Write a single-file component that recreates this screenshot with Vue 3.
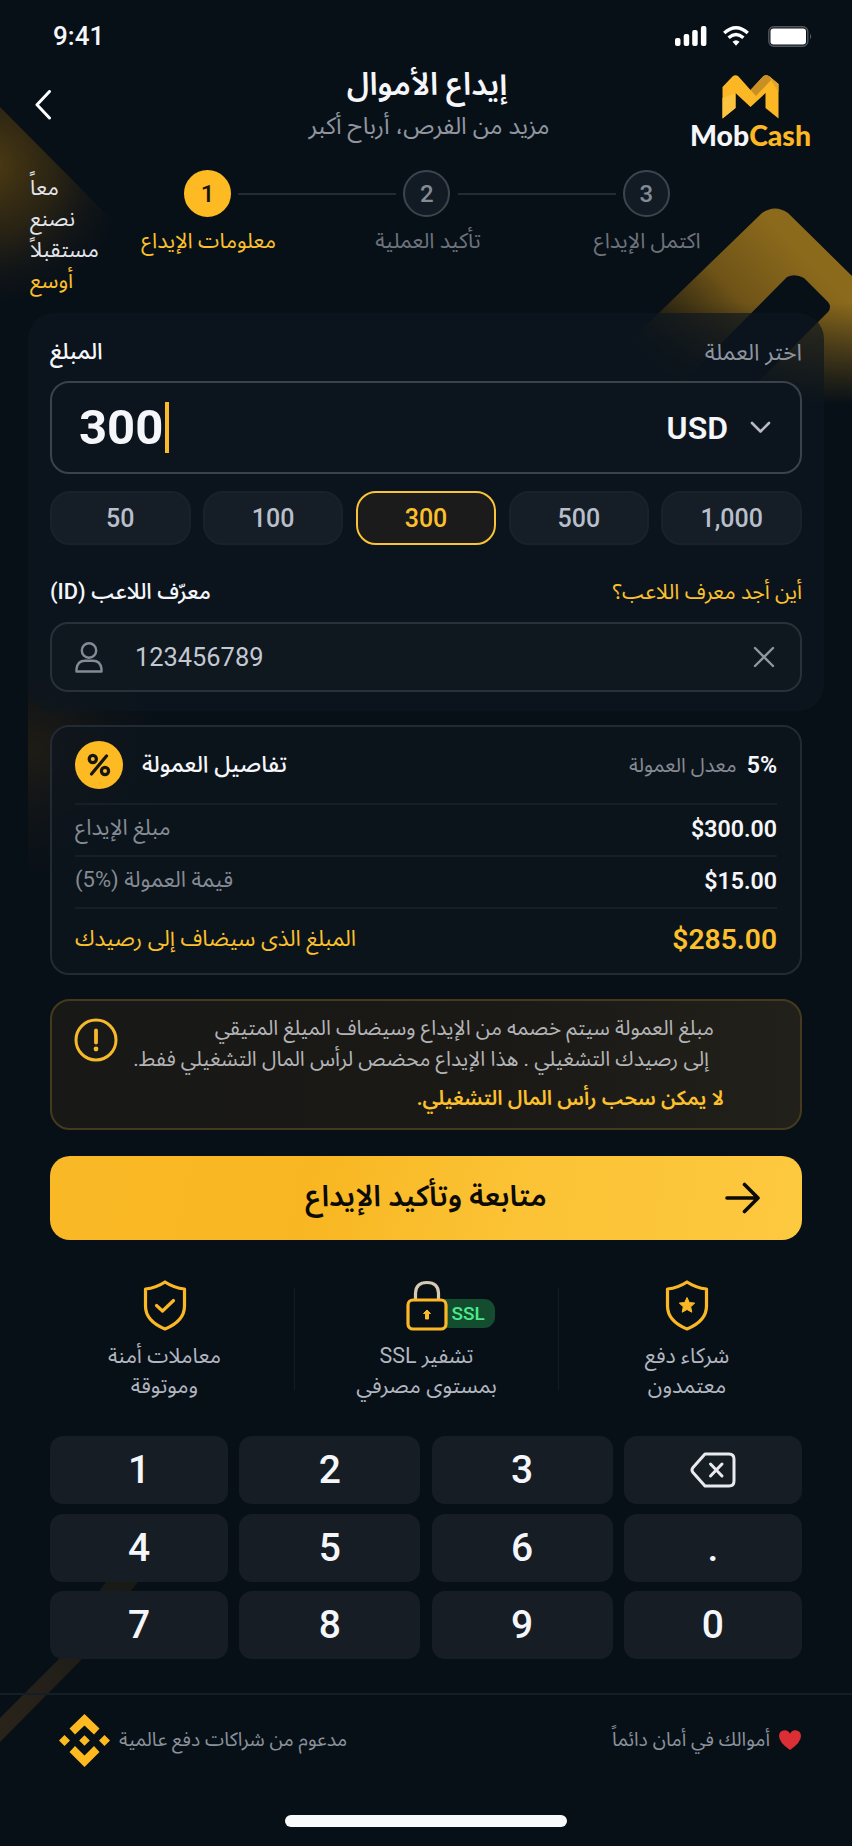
<script setup>
import { ref } from 'vue'

const amount = ref('300')
const presets = ['50', '100', '300', '500', '1,000']
const keys = ['1', '2', '3', 'back', '4', '5', '6', '.', '7', '8', '9', '0']
const steps = [
  { n: 1, label: 'معلومات الإيداع', active: true },
  { n: 2, label: 'تأكيد العملية', active: false },
  { n: 3, label: 'اكتمل الإيداع', active: false },
]
</script>

<template>
  <div class="screen">
    <svg class="decor" width="852" height="1846" viewBox="0 0 852 1846" aria-hidden="true">
      <defs>
        <linearGradient id="peak" gradientUnits="userSpaceOnUse" x1="790" y1="240" x2="650" y2="370">
          <stop offset="0" stop-color="#8c6a1c" />
          <stop offset="0.4" stop-color="#6f5418" />
          <stop offset="0.7" stop-color="#3a2e12" stop-opacity="0.9" />
          <stop offset="1" stop-color="#2a2312" stop-opacity="0" />
        </linearGradient>
        <linearGradient id="fadeY" x1="0" y1="0" x2="0" y2="1">
          <stop offset="0" stop-color="#fff" />
          <stop offset="0.5" stop-color="#fff" />
          <stop offset="1" stop-color="#000" />
        </linearGradient>
        <mask id="peakMask">
          <rect x="600" y="200" width="252" height="205" fill="url(#fadeY)" />
        </mask>
        <radialGradient id="wedge" gradientUnits="userSpaceOnUse" cx="-10" cy="165" r="140">
          <stop offset="0" stop-color="#4d3b12" />
          <stop offset="0.5" stop-color="#2b2413" stop-opacity="0.9" />
          <stop offset="1" stop-color="#14151a" stop-opacity="0" />
        </radialGradient>
        <radialGradient id="glow" gradientUnits="userSpaceOnUse" cx="34" cy="750" r="130">
          <stop offset="0" stop-color="#231e14" stop-opacity="0.85" />
          <stop offset="1" stop-color="#14151a" stop-opacity="0" />
        </radialGradient>
        <linearGradient id="beam" gradientUnits="userSpaceOnUse" x1="0" y1="1730" x2="130" y2="1585">
          <stop offset="0" stop-color="#29231a" />
          <stop offset="1" stop-color="#191916" />
        </linearGradient>
      </defs>
      <path d="M0 107 L120 228 V320 H0Z" fill="url(#wedge)" />
      <g mask="url(#peakMask)">
        <path
          fill="url(#peak)"
          fill-rule="evenodd"
          d="M762 213 Q775 204 788 213 L852 276 V405 H600 V370Z M787 277 Q795 273 804 278 L828 302 Q832 307 828 312 L735 405 H660Z"
        />
      </g>
      <rect x="28" y="640" width="180" height="250" fill="url(#glow)" />
      <path d="M0 1718 L58 1660 L97 1594 L106 1582 H138 L128 1594 L80 1661 L0 1742Z" fill="url(#beam)" />
    </svg>

    <header class="status">
      <span class="clock">9:41</span>
      <div class="status-icons">
        <svg width="32" height="20" viewBox="0 0 32 20" fill="#fff">
          <rect x="0" y="12" width="5.5" height="8" rx="2" />
          <rect x="8.7" y="8" width="5.5" height="12" rx="2" />
          <rect x="17.2" y="4" width="5.5" height="16" rx="2" />
          <rect x="25.9" y="0" width="5.5" height="20" rx="2" />
        </svg>
        <svg class="wifi" width="26" height="20" viewBox="0 0 26 20" fill="none" stroke="#fff" stroke-width="3.4">
          <path d="M1.2 7 Q13 -3.400 24.800 7" />
          <path d="M5.600 11.700 Q13 5.300 20.400 11.700" />
          <path d="M13 19.800 L9.500 15.800 Q13 12.800 16.500 15.800Z" fill="#fff" stroke="none" />
        </svg>
        <svg class="battery" width="45" height="21" viewBox="0 0 45 21" fill="none">
          <rect x="0.8" y="0.8" width="39" height="19.400" rx="5" stroke="#50565e" stroke-width="1.400" />
          <rect x="2.500" y="2.500" width="35.500" height="16" rx="3" fill="#fff" />
          <path d="M42 7.500 q2.500 3 0 6z" fill="#50565e" />
        </svg>
      </div>
    </header>

    <div class="top">
      <button class="back" aria-label="رجوع">
        <svg width="16" height="30" viewBox="0 0 16 30" fill="none" stroke="#fff" stroke-width="3" stroke-linecap="round" stroke-linejoin="round">
          <path d="M14.500 1.500 L2 14.800 L14.500 28" />
        </svg>
      </button>
      <div class="titles">
        <h1 dir="rtl">إيداع الأموال</h1>
        <p dir="rtl">مزيد من الفرص، أرباح أكبر</p>
      </div>
      <div class="brand">
        <svg width="57" height="44" viewBox="0 0 57 44">
          <path d="M0.500 12 L10.500 1.500 Q13.500 -0.800 16.500 1.500 L28.500 15 L41 1.500 Q44 -0.800 47.500 1.500 L56.500 9 V43.500 L43.500 33 V18 L28.500 32 L13.500 18 V33 L0.500 43.500Z" fill="#fbb724" />
          <path d="M28.500 15 L41 1.500 Q44 -0.800 47.500 1.500 L50 4 L34 21Z" fill="#c98f22" />
          <path d="M47.500 1.500 L56.500 9 V17 L49 5Z" fill="#e0a42a" />
          <path d="M0.500 23 L13.500 18 V33 L0.500 43.500Z" fill="#fbc340" />
        </svg>
        <span class="wordmark">Mob<b>Cash</b></span>
      </div>
    </div>

    <div class="progress">
      <p class="slogan" dir="rtl"><span>معاً</span><span>نصنع</span><span>مستقبلاً</span><b>أوسع</b></p>
      <div class="steps">
        <div v-for="s in steps" :key="s.n" class="step" :class="{ active: s.active }">
          <span class="dot">{{ s.n }}</span>
          <span class="step-label" dir="rtl">{{ s.label }}</span>
        </div>
      </div>
    </div>

    <section class="form">
      <div class="labels amount-labels">
        <span class="strong sum" dir="rtl">المبلغ</span>
        <span class="muted" dir="rtl">اختر العملة</span>
      </div>
      <div class="amount">
        <span class="value">{{ amount }}</span><i class="caret"></i>
        <span class="currency">USD</span>
        <svg width="21" height="13" viewBox="0 0 21 13" fill="none" stroke="#b5bac4" stroke-width="2.600" stroke-linecap="round" stroke-linejoin="round">
          <path d="M2 2 L10.500 10.500 L19 2" />
        </svg>
      </div>
      <div class="presets">
        <button v-for="p in presets" :key="p" :class="{ on: p === amount }">{{ p }}</button>
      </div>
      <div class="labels id-labels">
        <span class="strong" dir="rtl">معرّف اللاعب (ID)</span>
        <a class="link" dir="rtl">أين أجد معرف اللاعب؟</a>
      </div>
      <div class="player">
        <svg width="28" height="31" viewBox="0 0 28 31" fill="none" stroke="#858b96" stroke-width="2.400" stroke-linejoin="round">
          <circle cx="14" cy="8.500" r="7.200" />
          <path d="M1.500 29.500 V27 Q2.500 18.800 10 18.800 H18 Q25.500 18.800 26.500 27 V29.500Z" />
        </svg>
        <span class="player-id">123456789</span>
        <svg width="22" height="22" viewBox="0 0 22 22" fill="none" stroke="#9096a0" stroke-width="2.400" stroke-linecap="round">
          <path d="M2 2 L20 20 M20 2 L2 20" />
        </svg>
      </div>
    </section>

    <section class="fees">
      <div class="fee head">
        <span class="percent">
          <svg width="24" height="24" viewBox="0 0 24 24" fill="none" stroke="#17150f" stroke-width="3.200" stroke-linecap="round">
            <circle cx="5.800" cy="6" r="3.600" /><circle cx="18" cy="18" r="3.600" /><path d="M19.500 3 L4.500 21" />
          </svg>
        </span>
        <h2 dir="rtl">تفاصيل العمولة</h2>
        <span class="rate" dir="rtl">معدل العمولة</span>
        <b>5%</b>
      </div>
      <div class="fee"><span dir="rtl">مبلغ الإيداع</span><b>$300.00</b></div>
      <div class="fee"><span dir="rtl">قيمة العمولة <bdi dir="ltr">(5%)</bdi></span><b>$15.00</b></div>
      <div class="fee total"><span dir="rtl">المبلغ الذى سيضاف إلى رصيدك</span><b>$285.00</b></div>
    </section>

    <section class="notice">
      <svg width="44" height="44" viewBox="0 0 44 44" fill="none" stroke="#f6b92b" stroke-linecap="round">
        <circle cx="22" cy="22" r="20" stroke-width="3" />
        <path d="M22 12.500 V24.500" stroke-width="3.800" />
        <circle cx="22" cy="31" r="2.400" fill="#f6b92b" stroke="none" />
      </svg>
      <div class="notice-text">
        <p class="n1" dir="rtl">مبلغ العمولة سيتم خصمه من الإيداع وسيضاف الميلغ المتيقي</p>
        <p class="n2" dir="rtl">إلى رصيدك التشغيلي . هذا الإيداع محضص لرأس المال التشغيلي ففط.</p>
        <p class="n3" dir="rtl">لا يمكن سحب رأس المال التشغيلي.</p>
      </div>
    </section>

    <button class="submit">
      <span dir="rtl">متابعة وتأكيد الإيداع</span>
      <svg width="36" height="32" viewBox="0 0 36 32" fill="none" stroke="#0b0a06" stroke-width="3.600" stroke-linejoin="round" stroke-linecap="round">
        <path d="M2 16 H33 M19.500 2.500 L33 16 L19.500 29.500" />
      </svg>
    </button>

    <section class="trust">
      <div class="trust-item first">
        <svg width="44" height="51" viewBox="0 0 44 51" fill="none" stroke="#fbb824" stroke-width="3.200" stroke-linejoin="round" stroke-linecap="round">
          <path d="M22 2 Q31 8 41.500 9 V26 Q41.500 41 22 49 Q2.500 41 2.500 26 V9 Q13 8 22 2Z" />
          <path d="M13.500 25.500 L19.500 31 L30.500 20.500" />
        </svg>
        <p dir="rtl">معاملات أمنة<br />وموتوقة</p>
      </div>
      <div class="trust-item mid">
        <div class="lock">
          <svg width="42" height="51" viewBox="0 0 42 51" fill="none" stroke-width="3.200">
            <path d="M9.500 20 V13 Q10 2.500 21 2.500 Q32 2.500 32.500 13 V20" stroke="#d6cab2" />
            <rect x="2" y="20" width="38" height="29" rx="5" fill="#081017" stroke="#fbb824" />
            <path d="M21 30 L24.500 33.500 H22.500 V39 H19.500 V33.500 H17.500Z" fill="#fbb824" stroke="#fbb824" stroke-width="1" stroke-linejoin="round" />
          </svg>
          <span class="ssl">SSL</span>
        </div>
        <p dir="rtl">تشفير SSL<br />بمستوى مصرفي</p>
      </div>
      <div class="trust-item last">
        <svg width="44" height="51" viewBox="0 0 44 51" fill="none" stroke="#fbb824" stroke-width="3.200" stroke-linejoin="round">
          <path d="M22 2 Q31 8 41.500 9 V26 Q41.500 41 22 49 Q2.500 41 2.500 26 V9 Q13 8 22 2Z" />
          <path d="M22 17.500 l2.300 5 5.400 .6 -4 3.700 1.100 5.400 -4.800 -2.700 -4.800 2.700 1.100 -5.400 -4 -3.700 5.400 -.6Z" fill="#fbb824" stroke-width="1" />
        </svg>
        <p dir="rtl">شركاء دفع<br />معتمدون</p>
      </div>
    </section>

    <section class="keypad">
      <button v-for="k in keys" :key="k">
        <svg v-if="k === 'back'" width="46" height="36" viewBox="0 0 46 36" fill="none" stroke="#e8eaf0" stroke-width="3" stroke-linejoin="round" stroke-linecap="round">
          <path d="M15 2 H39 Q44 2 44 7 V29 Q44 34 39 34 H15 L3 20.500 Q1 18 3 15.500Z" />
          <path d="M20.500 12 L32 24 M32 12 L20.500 24" />
        </svg>
        <template v-else>{{ k }}</template>
      </button>
    </section>

    <footer class="footer">
      <svg width="51" height="53" viewBox="0 0 51 53" fill="#fdb920">
        <path d="M25.500 0 L40.500 14.500 L35 20.500 L25.500 11.500 L16 20.500 L10.500 14.500Z" />
        <path d="M25.500 53 L40.500 38 L35 32 L25.500 41.500 L16 32 L10.500 38Z" />
        <path d="M25.500 21.200 L30.800 26.500 L25.500 31.800 L20.200 26.500Z M5.500 21 L11 26.500 L5.500 32 L0 26.500Z M45.500 21 L51 26.500 L45.500 32 L40 26.500Z" />
      </svg>
      <span class="f1" dir="rtl">مدعوم من شراكات دفع عالمية</span>
      <span class="f2" dir="rtl">أموالك في أمان دائماً</span>
      <svg class="heart" width="22" height="20" viewBox="0 0 22 20">
        <path d="M11 20 Q0 12.500 0 6 Q0.300 0.500 5.800 0.300 Q9.500 0.400 11 3.800 Q12.500 0.400 16.200 0.300 Q21.700 0.500 22 6 Q22 12.500 11 20Z" fill="#dc2f35" />
      </svg>
    </footer>
    <div class="home-bar"></div>
  </div>
</template>

<style>
html,
body {
  background: #081017;
}
</style>

<style scoped>
* {
  box-sizing: border-box;
  margin: 0;
  padding: 0;
}
.screen {
  position: relative;
  width: 852px;
  height: 1846px;
  overflow: hidden;
  background: #081017;
  color: #f5f6fa;
  font-family: Roboto, 'Noto Sans Arabic', Vazirmatn, 'Noto Sans', 'DejaVu Sans', sans-serif;
  display: flex;
  flex-direction: column;
}
.screen > * {
  position: relative;
  flex: none;
}
.screen > .decor {
  position: absolute;
  left: 0;
  top: 0;
}
button {
  border: 0;
  background: none;
  color: inherit;
  font: inherit;
}
span,
a,
h1,
h2,
p {
  white-space: nowrap;
}
.status {
  height: 72px;
  padding: 0 39px 0 53px;
  display: flex;
  justify-content: space-between;
  align-items: center;
}
.clock {
  font-size: 26px;
  font-weight: 500;
}
.status-icons {
  display: flex;
  align-items: center;
}
.wifi {
  margin-left: 16px;
}
.battery {
  margin-left: 19px;
}
.top {
  height: 90px;
  display: grid;
  grid-template-columns: 250px 352px 250px;
}
.back {
  justify-self: start;
  align-self: start;
  margin: 18px 0 0 35px;
  height: 30px;
}
.titles {
  display: flex;
  flex-direction: column;
  align-items: center;
  padding-left: 6px;
}
h1 {
  margin: -2px 4px 0 0;
  font-size: 31.300px;
  font-weight: 600;
  line-height: 30px;
}
.titles p {
  margin-top: 12px;
  font-size: 23.800px;
  line-height: 28px;
  color: #9096a0;
}
.brand {
  padding: 3px 0 0 47px;
  display: flex;
  flex-direction: column;
  align-items: center;
  width: 250px;
}
.wordmark {
  margin-top: -1px;
  font-family: Lato, sans-serif;
  font-size: 28.400px;
  font-weight: 900;
  line-height: 34px;
}
.wordmark b {
  color: #fcb723;
  font-weight: 900;
}
.progress {
  height: 151px;
  display: flex;
}
.slogan {
  width: 98px;
  padding: 10px 0 0 30px;
  display: flex;
  flex-direction: column;
  align-items: flex-end;
  font-size: 21.600px;
  line-height: 31px;
  color: #e3e5ea;
}
.slogan {
  align-items: flex-end;
}
.slogan b {
  color: #fcc02c;
  font-weight: 400;
}
.steps {
  flex: none;
  width: 658px;
  display: flex;
}
.step {
  width: 219.300px;
  padding-top: 8px;
  display: flex;
  flex-direction: column;
  align-items: center;
  position: relative;
}
.step + .step::before {
  content: '';
  position: absolute;
  left: -79px;
  top: 31px;
  width: 158px;
  height: 2px;
  background: #252b34;
}
.dot {
  width: 47px;
  height: 47px;
  border-radius: 50%;
  border: 2px solid #3e444e;
  background: #121a24;
  color: #858b95;
  display: grid;
  place-items: center;
  font-size: 24px;
  font-weight: 500;
}
.step-label {
  margin: 8px 0 0 2px;
  font-size: 21.500px;
  line-height: 32px;
  color: #6d737d;
}
.active .dot {
  background: #fdba22;
  border-color: #fdba22;
  color: #17140c;
}
.active .step-label {
  color: #fcc02c;
}
.form {
  margin: 0 28px;
  height: 398px;
  padding: 0 22px;
  border-radius: 26px;
  background: rgba(14, 22, 31, 0.68);
}
.labels {
  display: flex;
  justify-content: space-between;
  align-items: center;
}
.amount-labels {
  height: 68px;
  padding-top: 10px;
}
.labels .strong {
  font-size: 21.900px;
  font-weight: 500;
}
.labels .sum {
  font-size: 22.700px;
}
.labels .muted {
  font-size: 23px;
  color: #8f959f;
}
.labels .link {
  font-size: 21.300px;
  color: #fcc02c;
}
.amount {
  height: 93px;
  border: 2px solid #3b424c;
  border-radius: 19px;
  background: #0c141d;
  padding: 0 29px 0 27px;
  display: flex;
  align-items: center;
}
.value {
  font-size: 49px;
  font-weight: 700;
}
.caret {
  width: 4px;
  height: 51px;
  margin-left: 2px;
  background: #fcb928;
}
.currency {
  margin-left: auto;
  margin-right: 22px;
  font-size: 32px;
  font-weight: 600;
}
.presets {
  margin-top: 17px;
  display: grid;
  grid-template-columns: repeat(5, 1fr);
  gap: 12.300px;
}
.presets button {
  height: 54px;
  border-radius: 20px;
  border: 2px solid #19212a;
  background: #151d26;
  font-size: 25px;
  font-weight: 500;
  color: #b9bfca;
}
.presets .on {
  border-color: #f8c337;
  background: #1b1b1b;
  color: #fcc02c;
}
.id-labels {
  height: 77px;
  padding-top: 17px;
}
.player {
  height: 70px;
  border: 2px solid #28303a;
  border-radius: 18px;
  background: #0f171f;
  padding: 0 25px 0 23px;
  display: flex;
  align-items: center;
}
.player-id {
  margin: 0 auto 0 32px;
  font-size: 25.400px;
  color: #c3c8d1;
}
.fees {
  margin: 14px 50px 0;
  height: 250px;
  border: 2px solid #222a33;
  border-radius: 19px;
  background: rgba(13, 21, 30, 0.75);
  padding: 0 23px 0 23px;
}
.fee {
  height: 52px;
  display: flex;
  align-items: center;
  justify-content: space-between;
  border-bottom: 2px solid #161e27;
}
.fee span {
  position: relative;
  top: -2px;
  font-size: 22px;
  color: #858b95;
}
.fee b {
  font-size: 23.200px;
  font-weight: 600;
  position: relative;
  top: -1px;
}
.fee.head {
  height: 78px;
}
.fee.head b {
  top: 0;
}
.fee.head .percent {
  top: 0;
  width: 48px;
  height: 48px;
  border-radius: 50%;
  background: #fdba22;
  display: grid;
  place-items: center;
}
.head h2 {
  margin: 0 auto 0 19px;
  font-size: 22.900px;
  font-weight: 500;
}
.fee.head .rate {
  top: 0;
  margin-right: 10px;
  font-size: 20.200px;
}
.fee.total {
  height: 62px;
  border: 0;
}
.total span,
.total b {
  color: #fcc02c;
}
.fee.total b {
  font-size: 28.200px;
}
.fee.total span {
  font-size: 22.200px;
}
.notice {
  margin: 24px 50px 0;
  height: 131px;
  border: 2px solid #453a1d;
  border-radius: 20px;
  background: linear-gradient(90deg, #181816, #1a1916 60%, #22201a);
  padding: 17px 23px 0 22px;
  display: flex;
}
.notice-text {
  flex: 1;
  font-size: 20.800px;
  line-height: 31px;
  color: #b3b4b6;
}
.n1 {
  padding-right: 63px;
  margin-top: -5px;
}
.n2 {
  padding-right: 68px;
}
.n3 {
  padding-right: 53px;
  margin-top: 8px;
  color: #fcc02c;
  font-size: 20.400px;
  font-weight: 600;
}
.submit {
  margin: 26px 50px 0;
  height: 84px;
  border-radius: 20px;
  background: linear-gradient(100deg, #f9b825 0%, #f8b722 35%, #fbc234 60%, #fdc93f 100%);
  color: #0b0a06;
  font-size: 29.400px;
  font-weight: 600;
  display: grid;
  grid-template-columns: 256px 240px 1fr;
  align-items: center;
}
.submit span {
  grid-column: 2;
  justify-self: center;
  padding-bottom: 3px;
}
.submit svg {
  justify-self: end;
  margin-right: 41px;
}
.trust {
  margin: 40px 29px 0;
  height: 156px;
  display: grid;
  grid-template-columns: 265px 264px 265px;
}
.trust-item {
  display: flex;
  flex-direction: column;
  align-items: center;
  position: relative;
}
.trust-item + .trust-item::before {
  content: '';
  position: absolute;
  left: 0;
  top: 8px;
  width: 1px;
  height: 102px;
  background: #131b24;
}
.trust-item p {
  margin-top: 10px;
  font-size: 21.400px;
  line-height: 29.500px;
  text-align: center;
  color: #b1b6c0;
}
.first {
  padding-left: 6px;
}
.last {
  padding-right: 7px;
}
.mid {
  padding-left: 1px;
}
.lock {
  position: relative;
  width: 42px;
  height: 51px;
}
.lock svg {
  position: relative;
  z-index: 1;
}
.ssl {
  position: absolute;
  left: 34px;
  top: 19px;
  width: 55px;
  height: 29px;
  padding-left: 12px;
  border-radius: 4px 11px 11px 4px;
  background: #144c30;
  color: #4cea8b;
  font-size: 19px;
  font-weight: 500;
  line-height: 29px;
}
.keypad {
  margin: 0 50px;
  display: grid;
  grid-template-columns: 178px 181px 181px 178px;
  gap: 9.500px 11.300px;
}
.keypad button {
  height: 68px;
  border-radius: 13px;
  background: #161d25;
  font-size: 39px;
  font-weight: 500;
  display: grid;
  place-items: center;
}
.footer {
  margin-top: 34px;
  height: 92px;
  border-top: 2px solid #151d26;
  padding: 0 51px 0 59px;
  display: flex;
  align-items: center;
}
.footer span {
  padding-bottom: 2px;
  font-size: 19.350px;
  color: #8b919c;
}
.f1 {
  margin-left: 9px;
}
.f2 {
  margin-left: auto;
}
.heart {
  margin-left: 9px;
}
.home-bar {
  margin: 30px auto 0;
  width: 282px;
  height: 12px;
  border-radius: 6px;
  background: #fafafa;
}
</style>
